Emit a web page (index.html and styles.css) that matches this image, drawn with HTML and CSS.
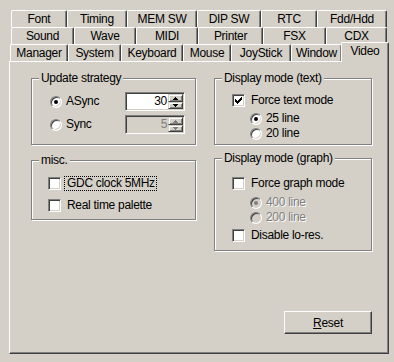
FILE: index.html
```html
<!DOCTYPE html>
<html lang="en">
<head>
    <meta charset="UTF-8">
    <meta name="viewport" content="width=device-width, initial-scale=1.0">
    <title>Video settings</title>
    <link rel="stylesheet" href="styles.css">
</head>
<body>
    <div class="dialog">
        <!-- Tab strip: three rows, the row with the selected tab sits at the bottom -->
        <div class="tabs">
            <div class="tab-row row-1">
                <div class="tab">Font</div>
                <div class="tab">Timing</div>
                <div class="tab">MEM SW</div>
                <div class="tab">DIP SW</div>
                <div class="tab">RTC</div>
                <div class="tab">Fdd/Hdd</div>
            </div>
            <div class="tab-row row-2">
                <div class="tab">Sound</div>
                <div class="tab">Wave</div>
                <div class="tab">MIDI</div>
                <div class="tab">Printer</div>
                <div class="tab">FSX</div>
                <div class="tab">CDX</div>
            </div>
            <div class="tab-row row-3">
                <div class="tab">Manager</div>
                <div class="tab">System</div>
                <div class="tab">Keyboard</div>
                <div class="tab">Mouse</div>
                <div class="tab">JoyStick</div>
                <div class="tab">Window</div>
                <div class="tab active">Video</div>
            </div>
        </div>

        <!-- Page -->
        <div class="panel">
            <div class="columns">
                <div class="col col-left">
                    <fieldset class="group">
                        <legend>Update strategy</legend>
                        <div class="group-body update">
                            <div class="spin-row">
                                <span class="radio checked"></span>
                                <span class="text">ASync</span>
                                <div class="edit">
                                    <span class="value">30</span>
                                    <div class="spin">
                                        <span class="spin-btn"><svg width="5" height="3" viewBox="0 0 5 3"><path d="M2 0h1v1H2zM1 1h3v1H1zM0 2h5v1H0z"/></svg></span>
                                        <span class="spin-btn"><svg width="5" height="3" viewBox="0 0 5 3"><path d="M0 0h5v1H0zM1 1h3v1H1zM2 2h1v1H2z"/></svg></span>
                                    </div>
                                </div>
                            </div>
                            <div class="spin-row">
                                <span class="radio"></span>
                                <span class="text">Sync</span>
                                <div class="edit disabled">
                                    <span class="value">5</span>
                                    <div class="spin">
                                        <span class="spin-btn"><svg width="5" height="3" viewBox="0 0 5 3"><path d="M2 0h1v1H2zM1 1h3v1H1zM0 2h5v1H0z"/></svg></span>
                                        <span class="spin-btn"><svg width="5" height="3" viewBox="0 0 5 3"><path d="M0 0h5v1H0zM1 1h3v1H1zM2 2h1v1H2z"/></svg></span>
                                    </div>
                                </div>
                            </div>
                        </div>
                    </fieldset>

                    <fieldset class="group">
                        <legend>misc.</legend>
                        <div class="group-body misc">
                            <div class="opt">
                                <span class="checkbox"></span>
                                <span class="text focused">GDC clock 5MHz</span>
                            </div>
                            <div class="opt">
                                <span class="checkbox"></span>
                                <span class="text">Real time palette</span>
                            </div>
                        </div>
                    </fieldset>
                </div>

                <div class="col col-right">
                    <fieldset class="group">
                        <legend>Display mode (text)</legend>
                        <div class="group-body text-mode">
                            <div class="opt">
                                <span class="checkbox"><svg width="7" height="7" viewBox="0 0 7 7"><path d="M6 0h1v1H6zM5 1h2v1H5zM0 2h1v1H0zM4 2h3v1H4zM0 3h2v1H0zM3 3h3v1H3zM0 4h5v1H0zM1 5h3v1H1zM2 6h1v1H2z"/></svg></span>
                                <span class="text">Force text mode</span>
                            </div>
                            <div class="sub">
                                <div class="opt">
                                    <span class="radio checked"></span>
                                    <span class="text">25 line</span>
                                </div>
                                <div class="opt">
                                    <span class="radio"></span>
                                    <span class="text">20 line</span>
                                </div>
                            </div>
                        </div>
                    </fieldset>

                    <fieldset class="group">
                        <legend>Display mode (graph)</legend>
                        <div class="group-body graph-mode">
                            <div class="opt">
                                <span class="checkbox"></span>
                                <span class="text">Force graph mode</span>
                            </div>
                            <div class="sub">
                                <div class="opt disabled">
                                    <span class="radio checked"></span>
                                    <span class="text">400 line</span>
                                </div>
                                <div class="opt disabled">
                                    <span class="radio"></span>
                                    <span class="text">200 line</span>
                                </div>
                            </div>
                            <div class="opt last">
                                <span class="checkbox"></span>
                                <span class="text">Disable lo-res.</span>
                            </div>
                        </div>
                    </fieldset>
                </div>
            </div>

            <div class="actions">
                <button type="button" class="btn"><u>R</u>eset</button>
            </div>
        </div>
    </div>
</body>
</html>
```

FILE: styles.css
```css
/* Base */
* {
    box-sizing: border-box;
}

body {
    margin: 0;
    background: #d4d0c8;
    font-family: "Liberation Sans", Arial, sans-serif;
    font-size: 12px;
    letter-spacing: -0.3px;
    color: #000;
}

.dialog {
    width: 394px;
    height: 362px;
    padding: 10px 0 0 9px;
}

/* Tab strip */
.tabs {
    padding-left: 1px;
}

.tab-row {
    display: grid;
    height: 17px;
}

.row-1 {
    margin-left: 1px;
    grid-template-columns: 56px 60px 70px 64px 56px 70px;
}

.row-2 {
    margin-left: 1px;
    grid-template-columns: 63px 62px 62px 65px 63px 61px;
}

.row-3 {
    grid-template-columns: 58px 53px 62px 48px 60px 51px 46px;
}

.tab {
    height: 17px;
    padding-top: 1px;
    line-height: 15px;
    text-align: center;
    white-space: nowrap;
    background: #d4d0c8;
    border: 1px solid;
    border-bottom: none;
    border-color: #fff #404040 #404040 #fff;
    border-radius: 2px 2px 0 0;
    box-shadow: inset -1px 0 #808080;
}

.tab.active {
    position: relative;
    z-index: 1;
    height: 20px;
    margin: -2px -1px 0;
}

/* Page panel */
.panel {
    display: flex;
    flex-direction: column;
    width: 380px;
    height: 293px;
    padding: 10px 16px 19px 21px;
    border: 1px solid;
    border-color: #fff #404040 #404040 #fff;
    box-shadow: inset -1px -1px #808080;
}

.columns {
    display: flex;
    align-items: flex-start;
    gap: 18px;
}

.col {
    display: flex;
    flex-direction: column;
}

.col-left {
    width: 165px;
    gap: 9px;
}

.col-right {
    width: 158px;
    gap: 7px;
}

/* Group boxes (etched frame) */
.group {
    margin: 0;
    padding: 0;
    min-width: 0;
    border: 1px solid #808080;
    box-shadow: 1px 1px #fff, inset 1px 1px #fff;
}

.group legend {
    margin-left: 7px;
    padding: 0 2px;
    line-height: 13px;
    background: #d4d0c8;
}

.update {
    padding: 7px 10px 10px 18px;
}

.misc {
    padding: 9px 0 6px 16px;
}

.text-mode {
    padding: 8px 0 3px 17px;
}

.graph-mode {
    padding: 11px 0 7px 17px;
}

.spin-row {
    display: flex;
    align-items: center;
    height: 19px;
}

.spin-row + .spin-row {
    margin-top: 4px;
}

.opt {
    display: flex;
    align-items: center;
    height: 15px;
}

.misc .opt + .opt {
    margin-top: 7px;
}

.text-mode .sub {
    margin-top: 3px;
    padding-left: 18px;
}

.graph-mode .sub {
    margin-top: 4px;
    padding-left: 18px;
}

.graph-mode .last {
    margin-top: 3px;
}

.text {
    padding: 0 1px 0 2px;
    line-height: 13px;
    white-space: nowrap;
}

.text.focused {
    outline: 1px dotted #000;
}

.opt.disabled .text {
    color: #808080;
    text-shadow: 1px 1px #fff;
}

/* Radio buttons */
.radio {
    display: flex;
    align-items: center;
    justify-content: center;
    flex-shrink: 0;
    width: 12px;
    height: 12px;
    margin-right: 2px;
    border: 1px solid;
    border-color: #808080 #fff #fff #808080;
    border-radius: 50%;
    background: #fff;
    box-shadow: inset 1px 1px #404040, inset -1px -1px #d4d0c8;
}

.radio.checked::after {
    content: "";
    width: 4px;
    height: 4px;
    border-radius: 50%;
    background: #000;
}

.opt.disabled .radio {
    background: #d4d0c8;
}

.opt.disabled .radio.checked::after {
    background: #808080;
}

/* Check boxes */
.checkbox {
    display: flex;
    align-items: center;
    justify-content: center;
    flex-shrink: 0;
    width: 13px;
    height: 13px;
    padding: 1px;
    margin-right: 4px;
    border: 1px solid;
    border-color: #808080 #fff #fff #808080;
    background: #fff;
    box-shadow: inset 1px 1px #404040, inset -1px -1px #d4d0c8;
}

.checkbox svg {
    display: block;
    fill: #000;
}

/* Edit with up-down buddy */
.edit {
    display: flex;
    width: 60px;
    height: 19px;
    margin-left: auto;
    padding: 1px;
    border: 1px solid;
    border-color: #808080 #fff #fff #808080;
    background: #fff;
    box-shadow: inset 1px 1px #404040, inset -1px -1px #d4d0c8;
}

.edit .value {
    flex: 1;
    padding-right: 1px;
    line-height: 15px;
    text-align: right;
}

.edit.disabled {
    background: #d4d0c8;
}

.edit.disabled .value {
    color: #808080;
}

.spin {
    display: flex;
    flex-direction: column;
    width: 15px;
}

.spin-btn {
    display: flex;
    align-items: center;
    justify-content: center;
    height: 8px;
    background: #d4d0c8;
    border: 1px solid;
    border-color: #d4d0c8 #404040 #404040 #d4d0c8;
    box-shadow: inset 1px 1px #fff, inset -1px -1px #808080;
}

.spin-btn + .spin-btn {
    height: 7px;
}

.spin-btn svg {
    display: block;
    fill: #000;
}

.edit.disabled .spin-btn svg {
    fill: #808080;
}

/* Push button */
.actions {
    display: flex;
    justify-content: flex-end;
    margin-top: auto;
}

.btn {
    width: 88px;
    height: 23px;
    padding: 0;
    font-family: inherit;
    font-size: 12px;
    letter-spacing: inherit;
    color: #000;
    background: #d4d0c8;
    border: 1px solid;
    border-color: #fff #404040 #404040 #fff;
    border-radius: 0;
    box-shadow: inset -1px -1px #808080;
}
```
